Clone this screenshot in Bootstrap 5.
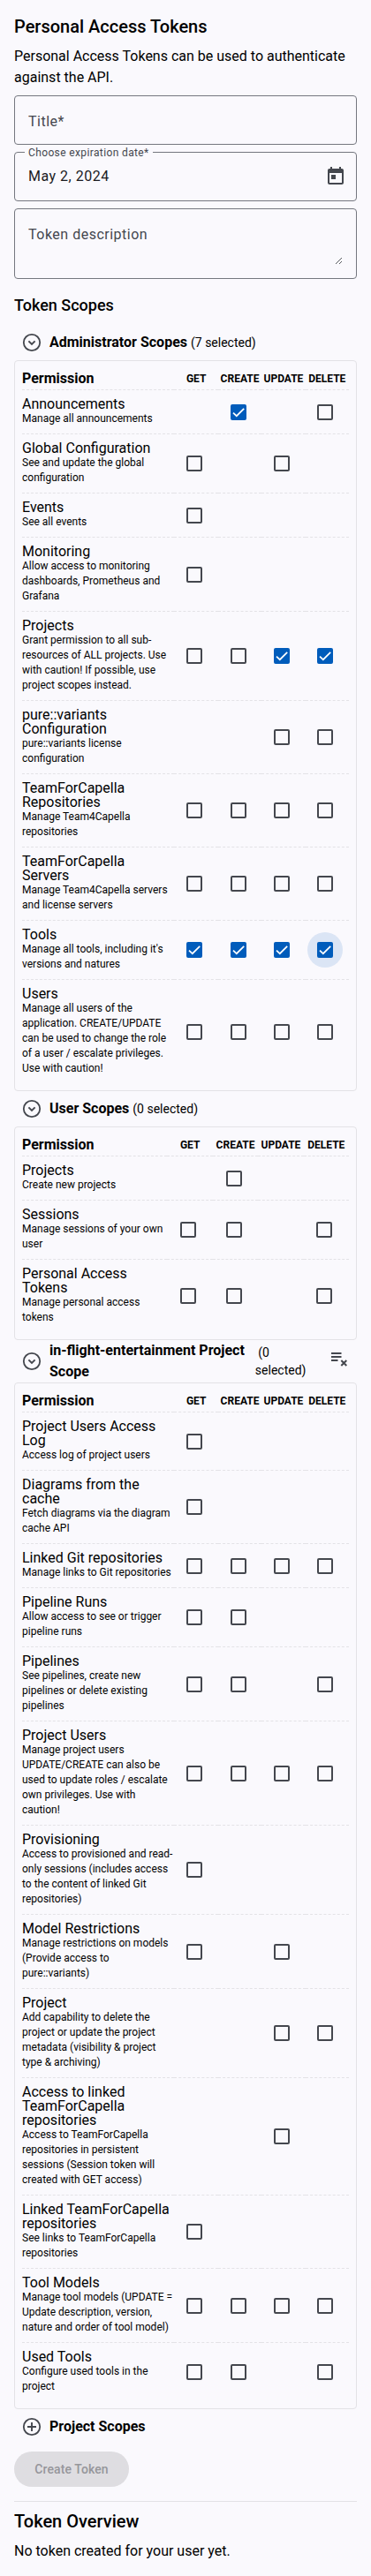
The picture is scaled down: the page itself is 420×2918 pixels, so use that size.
<!DOCTYPE html>
<html lang="en">
<head>
<meta charset="utf-8">
<meta name="viewport" content="width=device-width, initial-scale=1">
<title>Personal Access Tokens</title>
<link href="https://cdn.jsdelivr.net/npm/bootstrap@5.3.0/dist/css/bootstrap.min.css" rel="stylesheet">
<style>
  body { font-family: Roboto, "Liberation Sans", sans-serif; font-size: 16px; line-height: 24px; color: #000; background: #faf9fd; }
  h1, h2 { font-size: 20px; line-height: 28px; font-weight: 500; margin: 0 0 8px; }
  h2.scopes-title { font-size: 18px; }
  .field { position: relative; height: 56px; margin: 0 0 8px; border: 1px solid #74777f; border-radius: 4px; padding: 17px 15px 0; color: #44474e; letter-spacing: .5px; }
  .field.area { height: 80px; }
  .field .floating { position: absolute; left: 11px; top: -8px; padding: 0 4px; font-size: 12px; line-height: 16px; letter-spacing: .375px; background: #faf9fd; }
  .field .value { color: #1a1b1f; margin-top: -2px; }
  .field svg.today { margin: -2px -4px 0 0; }
  .grip { position: absolute; right: 15px; bottom: 15px; }
  .scope-head { min-height: 40px; padding: 0 8px; color: #000; }
  .scope-head svg { flex: none; color: #44474e; }
  .scope-name { font-weight: 700; margin-left: 8px; }
  .count { font-size: 14px; margin-left: 4px; }
  .project-count { line-height: 20px; margin-left: 12px; }
  .scope-card { border: 1px solid #e3e2e6; border-radius: 4px; padding: 8px; background: transparent; }
  .perm { table-layout: fixed; border-collapse: separate; border-spacing: 0; margin: 0; color: #000; --bs-table-bg: transparent; --bs-table-color: #000; }
  .perm > thead > tr > th, .perm > tbody > tr > td { border: 0; border-bottom: 1px dashed #e3e2e6; padding: 0; background: transparent; box-shadow: none; color: #000; }
  .perm > tbody > tr:last-child > td { border-bottom: 0; }
  .perm th { font-weight: 700; line-height: 24px; }
  .perm th + th { width: 49.4px; font-size: 12px; text-align: center; }
  .perm.wide th + th { width: 51.4px; }
  .perm > tbody > tr > td:first-child { padding: 8px 0; }
  .perm td + td { text-align: center; vertical-align: middle; line-height: 0; }
  .perm b { display: block; font-weight: 400; line-height: 16px; }
  .perm p { margin: 0; font-size: 12px; line-height: 17px; }
  .perm .form-check-input { width: 18px; height: 18px; margin: 0 4px 0 0; border: 2px solid #44474e; border-radius: 2px; background-color: transparent; vertical-align: top; }
  .perm .form-check-input:checked { background-color: #005cbb; border-color: #005cbb; background-size: 18px 18px; background-position: center; background-origin: border-box;
    background-image: url("data:image/svg+xml,%3Csvg xmlns='http://www.w3.org/2000/svg' viewBox='0 0 18 18'%3E%3Cpath d='M3 9.7 6.8 13.2 15.2 4.8' fill='none' stroke='%23fff' stroke-width='1.7'/%3E%3C/svg%3E"); }
  .halo { display: inline-block; position: relative; }
  .halo .form-check-input { position: relative; }
  .halo::before { content: ""; position: absolute; left: -11px; top: -11px; width: 40px; height: 40px; border-radius: 50%; background: #dbe5f5; }
  .create { height: 40px; width: 130px; margin-top: 8px; padding: 0; border: 0; border-radius: 20px; font-size: 14px; font-weight: 500; letter-spacing: .1px; }
  .create:disabled { background: #dedde1; color: #96969b; opacity: 1; }
  .rule { margin: 16px 0 0; height: 1px; background: #e3e2e6; }
</style>
</head>
<body>
<svg class="d-none" xmlns="http://www.w3.org/2000/svg">
  <symbol id="collapse" viewBox="0 0 24 24"><circle cx="12" cy="12" r="9.2" fill="none" stroke="currentColor" stroke-width="1.8"/><path d="M8.4 10.4 12 13.9 15.6 10.4" fill="none" stroke="currentColor" stroke-width="2"/></symbol>
  <symbol id="add" viewBox="0 0 24 24"><circle cx="12" cy="12" r="9.2" fill="none" stroke="currentColor" stroke-width="1.8"/><path d="M12 7v10M7 12h10" fill="none" stroke="currentColor" stroke-width="1.9"/></symbol>
</svg>
<main class="p-3 pb-0">
  <h1>Personal Access Tokens</h1>
  <p class="mb-2">Personal Access Tokens can be used to authenticate against the API.</p>
  <div class="field">Title*</div>
  <div class="field d-flex justify-content-between">
    <span class="floating">Choose expiration date*</span>
    <span class="value">May 2, 2024</span>
    <svg class="today" width="24" height="24" viewBox="0 0 24 24" fill="#44474e"><path d="M19 3h-1V1h-2v2H8V1H6v2H5c-1.1 0-2 .9-2 2v14c0 1.1.9 2 2 2h14c1.1 0 2-.9 2-2V5c0-1.1-.9-2-2-2zm0 16H5V8h14v11zM7 10h5v5H7z"/></svg>
  </div>
  <div class="field area mb-3">Token description
    <svg class="grip" width="9" height="9" viewBox="0 0 9 9" stroke="#44474e" stroke-width=".9"><path d="M1 8 8 1M5 8 8 5"/></svg>
  </div>

  <h2 class="scopes-title">Token Scopes</h2>

  <div class="scope-head d-flex align-items-center">
    <svg width="24" height="24"><use href="#collapse"/></svg>
    <span class="scope-name">Administrator Scopes</span><span class="count">(7 selected)</span>
  </div>
  <div class="scope-card">
    <table class="table perm">
      <thead><tr><th>Permission</th><th>GET</th><th>CREATE</th><th>UPDATE</th><th>DELETE</th></tr></thead>
      <tbody>
        <tr><td><b>Announcements</b><p>Manage all announcements</p></td><td></td><td><input class="form-check-input" type="checkbox" checked></td><td></td><td><input class="form-check-input" type="checkbox"></td></tr>
        <tr><td><b>Global Configuration</b><p>See and update the global configuration</p></td><td><input class="form-check-input" type="checkbox"></td><td></td><td><input class="form-check-input" type="checkbox"></td><td></td></tr>
        <tr><td><b>Events</b><p>See all events</p></td><td><input class="form-check-input" type="checkbox"></td><td></td><td></td><td></td></tr>
        <tr><td><b>Monitoring</b><p>Allow access to monitoring dashboards, Prometheus and Grafana</p></td><td><input class="form-check-input" type="checkbox"></td><td></td><td></td><td></td></tr>
        <tr><td><b>Projects</b><p>Grant permission to all sub-resources of ALL projects. Use with caution! If possible, use project scopes instead.</p></td><td><input class="form-check-input" type="checkbox"></td><td><input class="form-check-input" type="checkbox"></td><td><input class="form-check-input" type="checkbox" checked></td><td><input class="form-check-input" type="checkbox" checked></td></tr>
        <tr><td><b>pure::variants Configuration</b><p>pure::variants license configuration</p></td><td></td><td></td><td><input class="form-check-input" type="checkbox"></td><td><input class="form-check-input" type="checkbox"></td></tr>
        <tr><td><b>TeamForCapella Repositories</b><p>Manage Team4Capella repositories</p></td><td><input class="form-check-input" type="checkbox"></td><td><input class="form-check-input" type="checkbox"></td><td><input class="form-check-input" type="checkbox"></td><td><input class="form-check-input" type="checkbox"></td></tr>
        <tr><td><b>TeamForCapella Servers</b><p>Manage Team4Capella servers and license servers</p></td><td><input class="form-check-input" type="checkbox"></td><td><input class="form-check-input" type="checkbox"></td><td><input class="form-check-input" type="checkbox"></td><td><input class="form-check-input" type="checkbox"></td></tr>
        <tr><td><b>Tools</b><p>Manage all tools, including it's versions and natures</p></td><td><input class="form-check-input" type="checkbox" checked></td><td><input class="form-check-input" type="checkbox" checked></td><td><input class="form-check-input" type="checkbox" checked></td><td><span class="halo"><input class="form-check-input" type="checkbox" checked></span></td></tr>
        <tr><td><b>Users</b><p>Manage all users of the application. CREATE/UPDATE can be used to change the role of a user / escalate privileges. Use with caution!</p></td><td><input class="form-check-input" type="checkbox"></td><td><input class="form-check-input" type="checkbox"></td><td><input class="form-check-input" type="checkbox"></td><td><input class="form-check-input" type="checkbox"></td></tr>
      </tbody>
    </table>
  </div>

  <div class="scope-head d-flex align-items-center">
    <svg width="24" height="24"><use href="#collapse"/></svg>
    <span class="scope-name">User Scopes</span><span class="count">(0 selected)</span>
  </div>
  <div class="scope-card">
    <table class="table perm wide">
      <thead><tr><th>Permission</th><th>GET</th><th>CREATE</th><th>UPDATE</th><th>DELETE</th></tr></thead>
      <tbody>
        <tr><td><b>Projects</b><p>Create new projects</p></td><td></td><td><input class="form-check-input" type="checkbox"></td><td></td><td></td></tr>
        <tr><td><b>Sessions</b><p>Manage sessions of your own user</p></td><td><input class="form-check-input" type="checkbox"></td><td><input class="form-check-input" type="checkbox"></td><td></td><td><input class="form-check-input" type="checkbox"></td></tr>
        <tr><td><b>Personal Access Tokens</b><p>Manage personal access tokens</p></td><td><input class="form-check-input" type="checkbox"></td><td><input class="form-check-input" type="checkbox"></td><td></td><td><input class="form-check-input" type="checkbox"></td></tr>
      </tbody>
    </table>
  </div>

  <div class="scope-head d-flex align-items-center">
    <svg width="24" height="24"><use href="#collapse"/></svg>
    <span class="scope-name">in-flight-entertainment Project<br>Scope</span>
    <span class="count project-count">&nbsp;(0<br>selected)</span>
    <svg class="ms-auto" width="24" height="24" viewBox="0 0 24 24" fill="none" stroke="currentColor" stroke-width="2"><path d="M3 3h11.5M3 7h11.5M3 11h7.5M14.3 11l6 6M20.3 11l-6 6"/></svg>
  </div>
  <div class="scope-card">
    <table class="table perm">
      <thead><tr><th>Permission</th><th>GET</th><th>CREATE</th><th>UPDATE</th><th>DELETE</th></tr></thead>
      <tbody>
        <tr><td><b>Project Users Access Log</b><p>Access log of project users</p></td><td><input class="form-check-input" type="checkbox"></td><td></td><td></td><td></td></tr>
        <tr><td><b>Diagrams from the cache</b><p>Fetch diagrams via the diagram cache API</p></td><td><input class="form-check-input" type="checkbox"></td><td></td><td></td><td></td></tr>
        <tr><td><b>Linked Git repositories</b><p>Manage links to Git repositories</p></td><td><input class="form-check-input" type="checkbox"></td><td><input class="form-check-input" type="checkbox"></td><td><input class="form-check-input" type="checkbox"></td><td><input class="form-check-input" type="checkbox"></td></tr>
        <tr><td><b>Pipeline Runs</b><p>Allow access to see or trigger pipeline runs</p></td><td><input class="form-check-input" type="checkbox"></td><td><input class="form-check-input" type="checkbox"></td><td></td><td></td></tr>
        <tr><td><b>Pipelines</b><p>See pipelines, create new pipelines or delete existing pipelines</p></td><td><input class="form-check-input" type="checkbox"></td><td><input class="form-check-input" type="checkbox"></td><td></td><td><input class="form-check-input" type="checkbox"></td></tr>
        <tr><td><b>Project Users</b><p>Manage project users UPDATE/CREATE can also be used to update roles / escalate own privileges. Use with caution!</p></td><td><input class="form-check-input" type="checkbox"></td><td><input class="form-check-input" type="checkbox"></td><td><input class="form-check-input" type="checkbox"></td><td><input class="form-check-input" type="checkbox"></td></tr>
        <tr><td><b>Provisioning</b><p>Access to provisioned and read-only sessions (includes access to the content of linked Git repositories)</p></td><td><input class="form-check-input" type="checkbox"></td><td></td><td></td><td></td></tr>
        <tr><td><b>Model Restrictions</b><p>Manage restrictions on models (Provide access to pure::variants)</p></td><td><input class="form-check-input" type="checkbox"></td><td></td><td><input class="form-check-input" type="checkbox"></td><td></td></tr>
        <tr><td><b>Project</b><p>Add capability to delete the project or update the project metadata (visibility &amp; project type &amp; archiving)</p></td><td></td><td></td><td><input class="form-check-input" type="checkbox"></td><td><input class="form-check-input" type="checkbox"></td></tr>
        <tr><td><b>Access to linked TeamForCapella repositories</b><p>Access to TeamForCapella repositories in persistent sessions (Session token will created with GET access)</p></td><td></td><td></td><td><input class="form-check-input" type="checkbox"></td><td></td></tr>
        <tr><td><b>Linked TeamForCapella repositories</b><p>See links to TeamForCapella repositories</p></td><td><input class="form-check-input" type="checkbox"></td><td></td><td></td><td></td></tr>
        <tr><td><b>Tool Models</b><p>Manage tool models (UPDATE = Update description, version, nature and order of tool model)</p></td><td><input class="form-check-input" type="checkbox"></td><td><input class="form-check-input" type="checkbox"></td><td><input class="form-check-input" type="checkbox"></td><td><input class="form-check-input" type="checkbox"></td></tr>
        <tr><td><b>Used Tools</b><p>Configure used tools in the project</p></td><td><input class="form-check-input" type="checkbox"></td><td><input class="form-check-input" type="checkbox"></td><td></td><td><input class="form-check-input" type="checkbox"></td></tr>
      </tbody>
    </table>
  </div>

  <div class="scope-head d-flex align-items-center">
    <svg width="24" height="24"><use href="#add"/></svg>
    <span class="scope-name">Project Scopes</span>
  </div>
  <button class="btn create d-block" type="button" disabled>Create Token</button>
  <div class="rule mb-2"></div>
  <h2>Token Overview</h2>
  <p class="mb-0">No token created for your user yet.</p>
</main>
<script src="https://cdn.jsdelivr.net/npm/bootstrap@5.3.0/dist/js/bootstrap.bundle.min.js"></script>
</body>
</html>
